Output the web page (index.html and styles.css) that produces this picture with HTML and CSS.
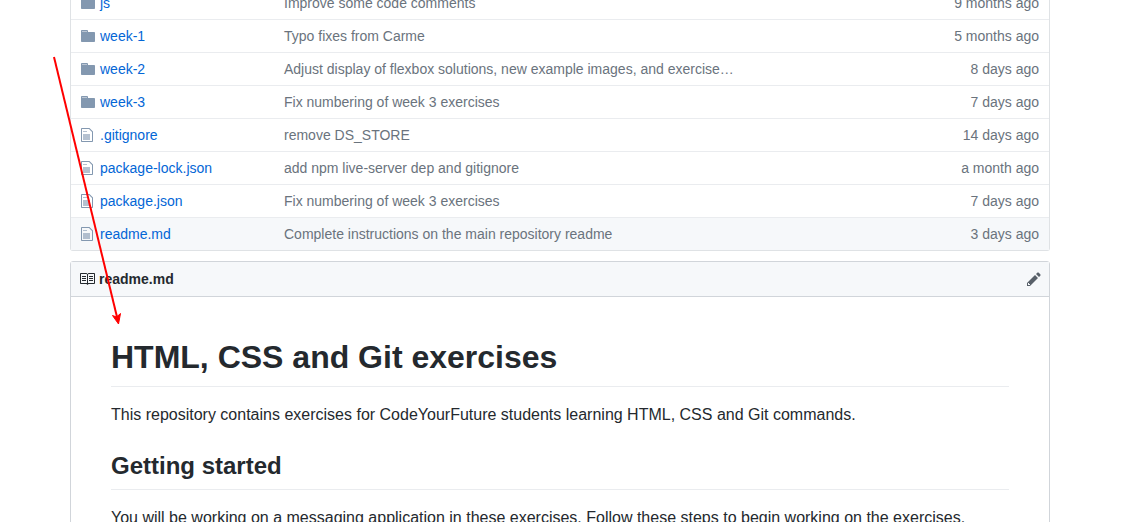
FILE: index.html
```html
<!DOCTYPE html>
<html lang="en">
<head>
<meta charset="utf-8">
<title>HTML, CSS and Git exercises</title>
<link rel="stylesheet" href="styles.css">
</head>
<body>
<svg class="symbols" aria-hidden="true">
  <symbol id="folder" viewBox="0 0 14 16"><path d="M13 4H7V3c0-.66-.31-1-1-1H1c-.55 0-1 .45-1 1v10c0 .55.45 1 1 1h12c.55 0 1-.45 1-1V5c0-.55-.45-1-1-1zM6 4H1V3h5v1z"/><path opacity=".55" d="M1 3h5v1H1z"/></symbol>
  <symbol id="file" viewBox="0 0 12 16"><path d="M8.500 1H1c-.55 0-1 .45-1 1v12c0 .55.45 1 1 1h10c.55 0 1-.45 1-1V4.500L8.500 1zM11 14H1V2h7l3 3v9z"/><path opacity=".6" d="M2 4h4v1H2zM2 7h7v6H2z"/></symbol>
  <symbol id="book" viewBox="0 0 16 16"><path d="M3 5h4v1H3V5zm0 3h4V7H3v1zm0 2h4V9H3v1zm11-5h-4v1h4V5zm0 2h-4v1h4V7zm0 2h-4v1h4V9zm2-6v9c0 .55-.45 1-1 1H9.500l-1 1-1-1H2c-.55 0-1-.45-1-1V3c0-.55.45-1 1-1h5.500l1 1 1-1H15c.55 0 1 .45 1 1zm-8 .5L7.500 3H2v9h6V3.500zm7-.5H9.500l-.5.5V12h6V3z"/></symbol>
  <symbol id="pencil" viewBox="0 0 14 16"><path d="M0 12v3h3l8-8-3-3-8 8zm3 2H1v-2h1v1h1v1zm10.300-9.300L12 6 9 3l1.300-1.300a.996.996 0 0 1 1.410 0l1.590 1.590c.39.39.39 1.020 0 1.410z"/></symbol>
</svg>
<main class="container">
  <table class="files">
    <tbody>
      <tr><td class="icon"><svg class="folder"><use href="#folder"/></svg></td><td class="name"><a href="#">js</a></td><td class="message">Improve some code comments</td><td class="age">9 months ago</td></tr>
      <tr><td class="icon"><svg class="folder"><use href="#folder"/></svg></td><td class="name"><a href="#">week-1</a></td><td class="message">Typo fixes from Carme</td><td class="age">5 months ago</td></tr>
      <tr><td class="icon"><svg class="folder"><use href="#folder"/></svg></td><td class="name"><a href="#">week-2</a></td><td class="message">Adjust display of flexbox solutions, new example images, and exercise…</td><td class="age">8 days ago</td></tr>
      <tr><td class="icon"><svg class="folder"><use href="#folder"/></svg></td><td class="name"><a href="#">week-3</a></td><td class="message">Fix numbering of week 3 exercises</td><td class="age">7 days ago</td></tr>
      <tr><td class="icon"><svg class="file"><use href="#file"/></svg></td><td class="name"><a href="#">.gitignore</a></td><td class="message">remove DS_STORE</td><td class="age">14 days ago</td></tr>
      <tr><td class="icon"><svg class="file"><use href="#file"/></svg></td><td class="name"><a href="#">package-lock.json</a></td><td class="message">add npm live-server dep and gitignore</td><td class="age">a month ago</td></tr>
      <tr><td class="icon"><svg class="file"><use href="#file"/></svg></td><td class="name"><a href="#">package.json</a></td><td class="message">Fix numbering of week 3 exercises</td><td class="age">7 days ago</td></tr>
      <tr class="current"><td class="icon"><svg class="file"><use href="#file"/></svg></td><td class="name"><a href="#">readme.md</a></td><td class="message">Complete instructions on the main repository readme</td><td class="age">3 days ago</td></tr>
    </tbody>
  </table>
  <section class="readme">
    <header class="readme-header">
      <svg class="book"><use href="#book"/></svg>
      <h3>readme.md</h3>
      <button class="edit" type="button" aria-label="Edit this file"><svg class="pencil"><use href="#pencil"/></svg></button>
    </header>
    <article class="markdown">
      <h1>HTML, CSS and Git exercises</h1>
      <p>This repository contains exercises for CodeYourFuture students learning HTML, CSS and Git commands.</p>
      <h2>Getting started</h2>
      <p>You will be working on a messaging application in these exercises. Follow these steps to begin working on the exercises.</p>
    </article>
  </section>
</main>
<svg class="arrow" viewBox="0 0 70 270" aria-hidden="true">
  <path d="M4 7L67 267" fill="none" stroke="#f00" stroke-width="2"/>
  <path d="M68.500 274L62.500 265.500l4 1.500 4-3.500z" fill="#f00" stroke="#f00"/>
</svg>
</body>
</html>
```
FILE: styles.css
```css
* {
  box-sizing: border-box;
}

body {
  height: 100vh;
  margin: 0;
  padding: 0 3px 0 0;
  overflow: hidden;
  background: #fff;
  color: #24292e;
  font: 14px/20px "Liberation Sans", Arial, sans-serif;
}

svg {
  display: block;
  fill: currentColor;
}

.symbols {
  position: absolute;
  width: 0;
  height: 0;
}

/* The list is scrolled: its first row is partly above the window. */
.container {
  max-width: 980px;
  margin: -14px auto 0;
}

.files {
  width: 100%;
  table-layout: fixed;
  border: 1px solid #dfe2e5;
  border-top: 0;
  border-radius: 3px;
  border-spacing: 0;
  color: #6a737d;
}

.files td {
  padding: 6px 0;
  border-top: 1px solid #eaecef;
  white-space: nowrap;
}

.files .icon {
  width: 29px;
  padding-left: 10px;
  color: #8398b0;
}

.files .name {
  width: 184px;
}

.files .age {
  width: 160px;
  padding-right: 10px;
  text-align: right;
}

.files a {
  color: #0366d6;
  text-decoration: none;
}

.current {
  background: #f6f8fa;
}

.folder {
  width: 14px;
  height: 16px;
}

.file {
  width: 12px;
  height: 16px;
}

.readme {
  margin-top: 10px;
  border: 1px solid #d1d5da;
  border-radius: 3px;
}

.readme-header {
  display: flex;
  align-items: center;
  height: 35px;
  padding: 0 8px;
  border-bottom: 1px solid #d1d5da;
  background: #f6f8fa;
}

.readme-header h3 {
  flex: 1;
  margin: 0 0 0 4px;
  font-size: 14px;
  line-height: 20px;
}

.book {
  width: 16px;
  height: 16px;
}

.edit {
  padding: 0;
  border: 0;
  background: none;
  color: #586069;
}

.pencil {
  width: 14px;
  height: 16px;
}

.markdown {
  padding: 40px;
  font-size: 16px;
  line-height: 24px;
}

.markdown h1,
.markdown h2 {
  border-bottom: 1px solid #eaecef;
}

.markdown h1 {
  margin: 0 0 16px;
  padding-bottom: 9px;
  font-size: 32px;
  line-height: 40px;
}

.markdown h2 {
  margin: 24px 0 16px;
  padding-bottom: 8px;
  font-size: 24px;
  line-height: 30px;
}

.markdown p {
  margin: 0 0 16px;
}

.arrow {
  position: absolute;
  top: 50px;
  left: 50px;
  width: 70px;
  height: 270px;
  overflow: visible;
  pointer-events: none;
}
```
